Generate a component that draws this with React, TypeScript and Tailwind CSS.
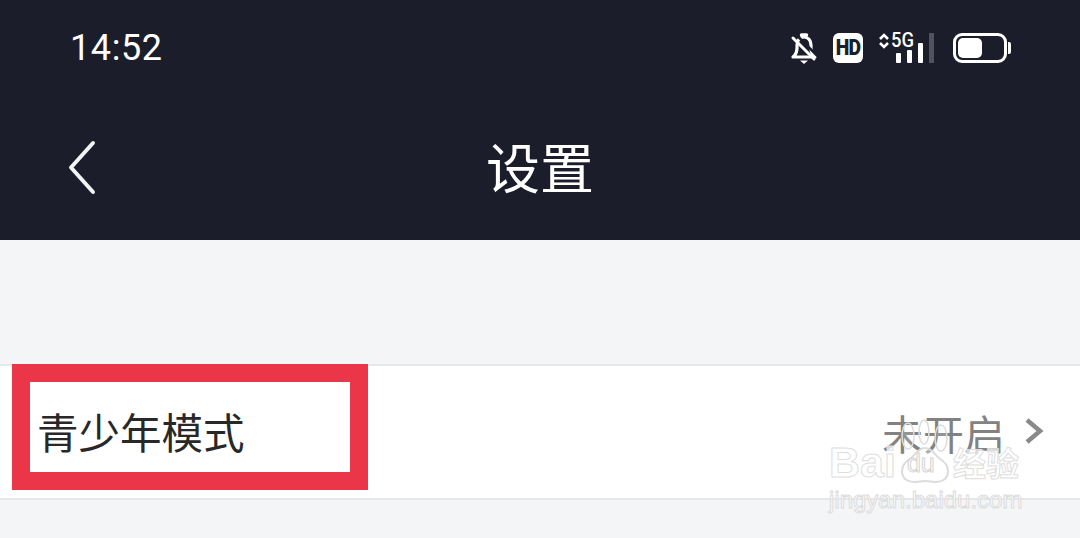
const cjk = "font-['Noto_Sans_CJK_SC','Noto_Sans',sans-serif]";

function StatusIcons() {
  return (
    <div className="flex items-center">
      <svg width="30" height="34" viewBox="0 0 30 34" fill="none" className="mr-[14px]">
        <path d="M4 26c2.500-2 4-4.500 4-9v-3c0-4.500 3-8 7-8s7 3.500 7 8v3c0 4.500 1.500 7 4 9z" stroke="white" strokeWidth="3.200" strokeLinejoin="round" />
        <path d="M12.500 4h5" stroke="white" strokeWidth="3.500" strokeLinecap="round" />
        <path d="M11 29.500h8l-4 3.500z" fill="white" />
        <path d="M4 7l21 21" stroke="white" strokeWidth="3" strokeLinecap="round" />
        <path d="M7.500 4l21 21" stroke="#1b1e2b" strokeWidth="2.500" />
      </svg>
      <div className="mr-[15px] flex h-[30px] w-[30px] items-center justify-center rounded-[6px] bg-white font-['Roboto',sans-serif] text-[#1b1e2b]">
        <span className="text-[22px] leading-none font-black tracking-[-1px] [transform:scaleX(0.88)]">HD</span>
      </div>
      <div className="relative mr-[19px] h-[32px] w-[56px]">
        <svg width="12" height="16" viewBox="0 0 12 16" className="absolute top-[1px] left-0" fill="none">
          <path d="M2 6l4-4 4 4M2 10l4 4 4-4" stroke="white" strokeWidth="2.600" />
        </svg>
        <span className="absolute top-[-3px] left-[12px] font-['Roboto',sans-serif] text-[20px] leading-[22px] font-medium text-white [transform:scaleX(0.92)]">5G</span>
        <div className="absolute bottom-[1px] left-[18px] flex items-end gap-[6px]">
          <div className="h-[10px] w-[5px] rounded-[1px] bg-white" />
          <div className="h-[13px] w-[5px] rounded-[1px] bg-white" />
          <div className="h-[20px] w-[5px] rounded-[1px] bg-white" />
          <div className="h-[30px] w-[5px] bg-[#50525f]" />
        </div>
      </div>
      <div className="flex items-center">
        <div className="flex h-[30px] w-[54px] items-center rounded-[9px] border-[3px] border-white p-[2px]">
          <div className="h-full w-[24px] rounded-[5px] bg-white" />
        </div>
        <div className="ml-[1px] h-[12px] w-[3px] rounded-r-[2px] bg-white" />
      </div>
    </div>
  );
}

export default function App() {
  return (
    <div className={`relative h-[538px] w-[1080px] overflow-hidden bg-[#f4f5f7] ${cjk}`}>
      <header className="flex h-[240px] flex-col bg-[#1b1d2a] text-white">
        <div className="flex h-[96px] items-center justify-between pr-[69px] pl-[70px]">
          <span className="font-['Roboto',sans-serif] text-[36px] leading-none tracking-[0.6px]">14:52</span>
          <StatusIcons />
        </div>
        <div className="relative flex h-[144px] items-start justify-center pt-[37px]">
          <svg width="30" height="56" viewBox="0 0 30 56" fill="none" className="absolute top-[44px] left-[67px]">
            <path d="M26 3L4 27.500 26 52" stroke="#f2f3f5" strokeWidth="4" strokeLinecap="round" strokeLinejoin="round" />
          </svg>
          <h1 className="text-[54px] leading-[66px] font-normal">设置</h1>
        </div>
      </header>

      <div className="mt-[124px] flex h-[136px] items-center justify-between border-y-2 border-[#e6e7e9] bg-white pr-[36px] pl-[37px]">
        <span className="text-[41.500px] leading-none text-[#282828]">青少年模式</span>
        <div className="flex items-center">
          <span className="text-[41px] leading-none text-[#828282]">未开启</span>
          <svg width="20" height="28" viewBox="0 0 20 28" fill="none" className="mt-[-2px] ml-[19px]">
            <path d="M3 3l13 11L3 25" stroke="#8a8a8a" strokeWidth="4.500" />
          </svg>
        </div>
      </div>

      <div className="absolute top-[364px] left-[12px] h-[126px] w-[356px] border-[18px] border-[#eb3549]" />

      <div className="pointer-events-none absolute top-[418px] left-[829px] flex w-[200px] flex-col items-start text-white">
        <div className="flex items-end">
          <span className="mb-[1px] font-['Liberation_Sans',sans-serif] text-[43px] leading-[42px] font-bold text-white/70 [-webkit-text-stroke:1px_#dedede]">Bai</span>
          <div className="relative ml-[3px] h-[66px] w-[52px]">
            <svg width="52" height="66" viewBox="0 0 52 66" fill="none" className="absolute inset-0" stroke="#dcdcdc" strokeWidth="1.500">
              <ellipse cx="9" cy="18" rx="6" ry="13" fill="#ffffff" fillOpacity="0.15" />
              <ellipse cx="25" cy="14" rx="5" ry="12" fillOpacity="0" />
              <ellipse cx="42" cy="20" rx="6" ry="13" fill="#ffffff" fillOpacity="0.15" />
              <path d="M26 30c7 0 9 6 14 10 5 3 9 7 9 13 0 8-6 11-12 11-4 0-7-1-11-1s-7 1-11 1C9 64 3 61 3 53c0-6 4-10 9-13 5-4 7-10 14-10z" fill="#ffffff" fillOpacity="0.35" strokeWidth="2" />
            </svg>
            <span className="absolute bottom-[8px] left-[8px] font-['Liberation_Sans',sans-serif] text-[25px] leading-none text-white [-webkit-text-stroke:1px_#d4d4d4]">du</span>
          </div>
          <span className="mb-[1px] ml-[2px] text-[33px] leading-[42px] font-bold text-white/70 [-webkit-text-stroke:1px_#dedede]">经验</span>
        </div>
        <span className="mt-[3px] font-['Liberation_Sans',sans-serif] text-[24px] leading-[26px] text-white/70 [-webkit-text-stroke:1px_#dcdcdc]">jingyan.baidu.com</span>
      </div>
    </div>
  );
}
